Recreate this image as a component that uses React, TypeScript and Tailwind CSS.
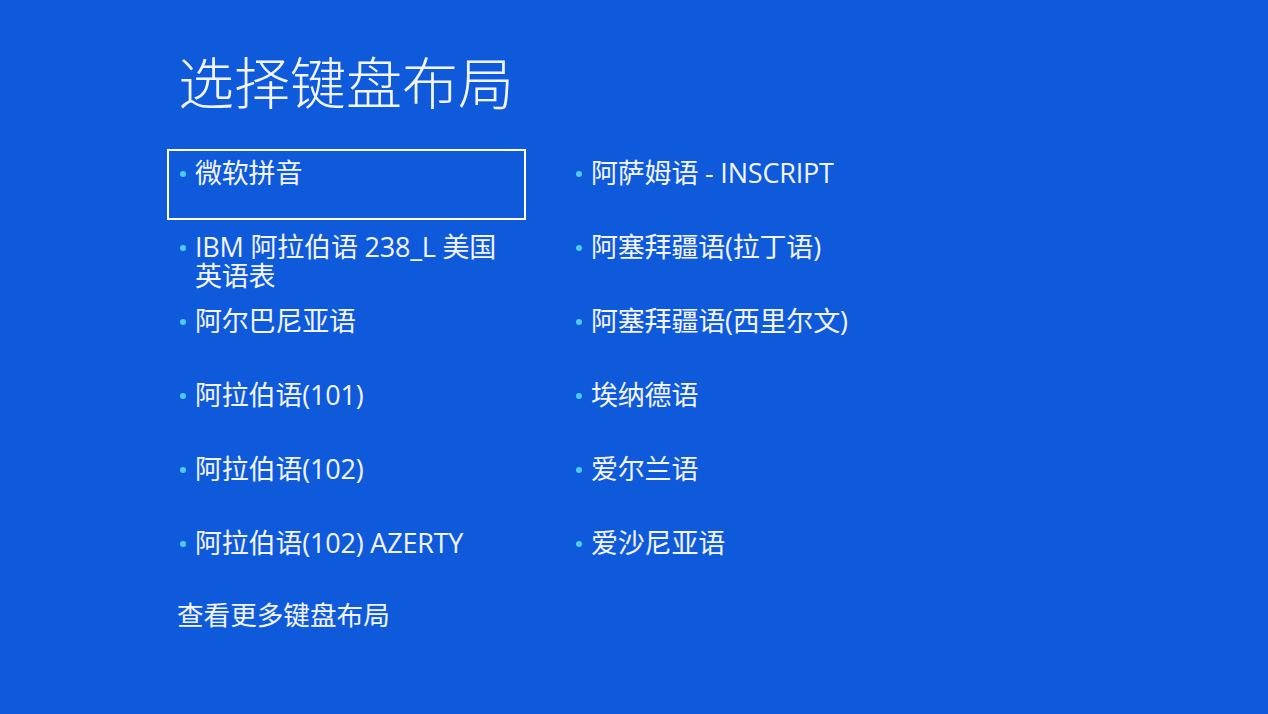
import React, { ReactElement } from 'react';

const LEFT = [
  '微软拼音',
  'IBM 阿拉伯语 238_L 美国英语表',
  '阿尔巴尼亚语',
  '阿拉伯语(101)',
  '阿拉伯语(102)',
  '阿拉伯语(102) AZERTY',
];

const RIGHT = [
  '阿萨姆语 - INSCRIPT',
  '阿塞拜疆语(拉丁语)',
  '阿塞拜疆语(西里尔文)',
  '埃纳德语',
  '爱尔兰语',
  '爱沙尼亚语',
];

const FONT = {
  fontFamily: '"Open Sans", "Noto Sans CJK SC", "Noto Sans", sans-serif',
};

export default function App(): ReactElement {
  return (
    <div
      className="w-[1268px] h-[714px] overflow-hidden bg-[#0f5adb] text-[#f2f5ff]"
      style={FONT}
    >
      <div className="pl-[167px] pt-[44px]">
        <h1 className="pl-[11px] text-[56px] leading-[76px] font-light">
          选择键盘布局
        </h1>
        <div className="mt-[29px] grid grid-cols-[359px_359px] gap-x-[37px] gap-y-[3px]">
          {LEFT.map((label, i) => (
            <React.Fragment key={label}>
              <LayoutItem label={label} focused={i === 0} />
              <LayoutItem label={RIGHT[i]} />
            </React.Fragment>
          ))}
        </div>
        <div className="mt-[10px] pl-[10px] text-[26.6px] leading-[30px]">
          查看更多键盘布局
        </div>
      </div>
    </div>
  );
}

function LayoutItem(props: { label: string; focused?: boolean }): ReactElement {
  return (
    <div
      className={
        'h-[71px] flex flex-row items-start pt-[7px] pl-[11px] pr-[22px] border-2 ' +
        (props.focused ? 'border-white' : 'border-transparent')
      }
    >
      <span className="mt-[13px] w-[6px] h-[6px] rounded-full bg-[#4ccdf7] shrink-0" />
      <span className="ml-[9px] text-[27px] leading-[29px] tracking-[-0.2px]">
        {props.label}
      </span>
    </div>
  );
}
